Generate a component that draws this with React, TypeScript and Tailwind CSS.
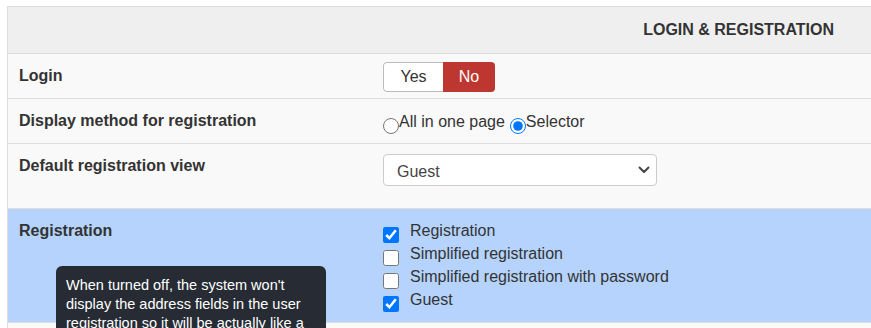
import React from "react";

function Label({ children }: { children: React.ReactNode }) {
  return (
    <div className="w-[375px] shrink-0 pl-[11px] pt-[12px] text-[16px] font-bold leading-[20px] text-[#333]">
      {children}
    </div>
  );
}

export default function App() {
  const checks: [string, boolean][] = [
    ["Registration", true],
    ["Simplified registration", false],
    ["Simplified registration with password", false],
    ["Guest", true],
  ];
  return (
    <div className="relative w-[871px] h-[328px] overflow-hidden bg-white font-['Liberation_Sans',Arial,sans-serif] text-[#333]">
      <div className="ml-[7px] mt-[6px] border-l border-t border-[#ddd]">
        <div className="h-[47px] bg-[#efefef] border-b border-[#ddd] flex items-center justify-end pr-[37px] text-[16px] font-bold leading-[20px] text-[#333]">
          LOGIN &amp; REGISTRATION
        </div>

        <div className="flex h-[45px] bg-[#f9f9f9] border-b border-[#ddd]">
          <Label>Login</Label>
          <div className="pt-[8px]">
            <div className="flex h-[30px] text-[16px] leading-[20px] rounded-[4px] overflow-hidden">
              <div className="w-[60px] flex items-center justify-center bg-white border border-r-0 border-[#bbb] rounded-l-[4px] text-[#333]">
                Yes
              </div>
              <div className="w-[52px] flex items-center justify-center bg-[#bd362f] text-white">
                No
              </div>
            </div>
          </div>
        </div>

        <div className="flex h-[45px] bg-[#f9f9f9] border-b border-[#ddd]">
          <Label>Display method for registration</Label>
          <div className="pt-[13px] flex items-start text-[16px] leading-[20px] text-[#333]">
            <input type="radio" name="dm" className="m-0 mt-[6px] w-[16px] h-[16px]" />
            <span className="mr-[5px]">All in one page</span>
            <input type="radio" name="dm" defaultChecked className="m-0 mt-[6px] w-[16px] h-[16px]" />
            <span>Selector</span>
          </div>
        </div>

        <div className="flex h-[65px] bg-[#f9f9f9] border-b border-[#ddd]">
          <Label>Default registration view</Label>
          <div className="pt-[10px]">
            <div className="w-[274px] h-[32px] bg-white border border-[#ccc] rounded-[4px] flex items-center justify-between pl-[13px] pr-[6px] text-[16px] text-[#444]">
              <span className="pt-[3px]">Guest</span>
              <svg width="12" height="8" viewBox="0 0 12 8">
                <path d="M1.5 1.5 L6 6 L10.5 1.5" fill="none" stroke="#444" strokeWidth="2" strokeLinecap="round" strokeLinejoin="round" />
              </svg>
            </div>
          </div>
        </div>

        <div className="flex h-[114px] bg-[#b5d3fd] border-b border-[#ddd]">
          <Label>Registration</Label>
          <div className="pt-[10px] flex flex-col">
            {checks.map(([t, c]) => (
              <div key={t} className="flex items-start gap-[11px] h-[23px] text-[16px] leading-[23px] text-[#333]">
                <input type="checkbox" defaultChecked={c} className="m-0 mt-[8px] w-[16px] h-[16px]" />
                <span>{t}</span>
              </div>
            ))}
          </div>
        </div>
        <div className="h-[20px] bg-[#f9f9f9]" />
      </div>

      <div className="absolute left-[56px] top-[266px] w-[270px] h-[90px] bg-[#272c34] rounded-[6px] pt-[10px] pl-[10px] text-white text-[14.5px] leading-[19px]">
        <div className="whitespace-nowrap">When turned off, the system won't</div>
        <div className="whitespace-nowrap">display the address fields in the user</div>
        <div className="whitespace-nowrap">registration so it will be actually like a</div>
      </div>
    </div>
  );
}
